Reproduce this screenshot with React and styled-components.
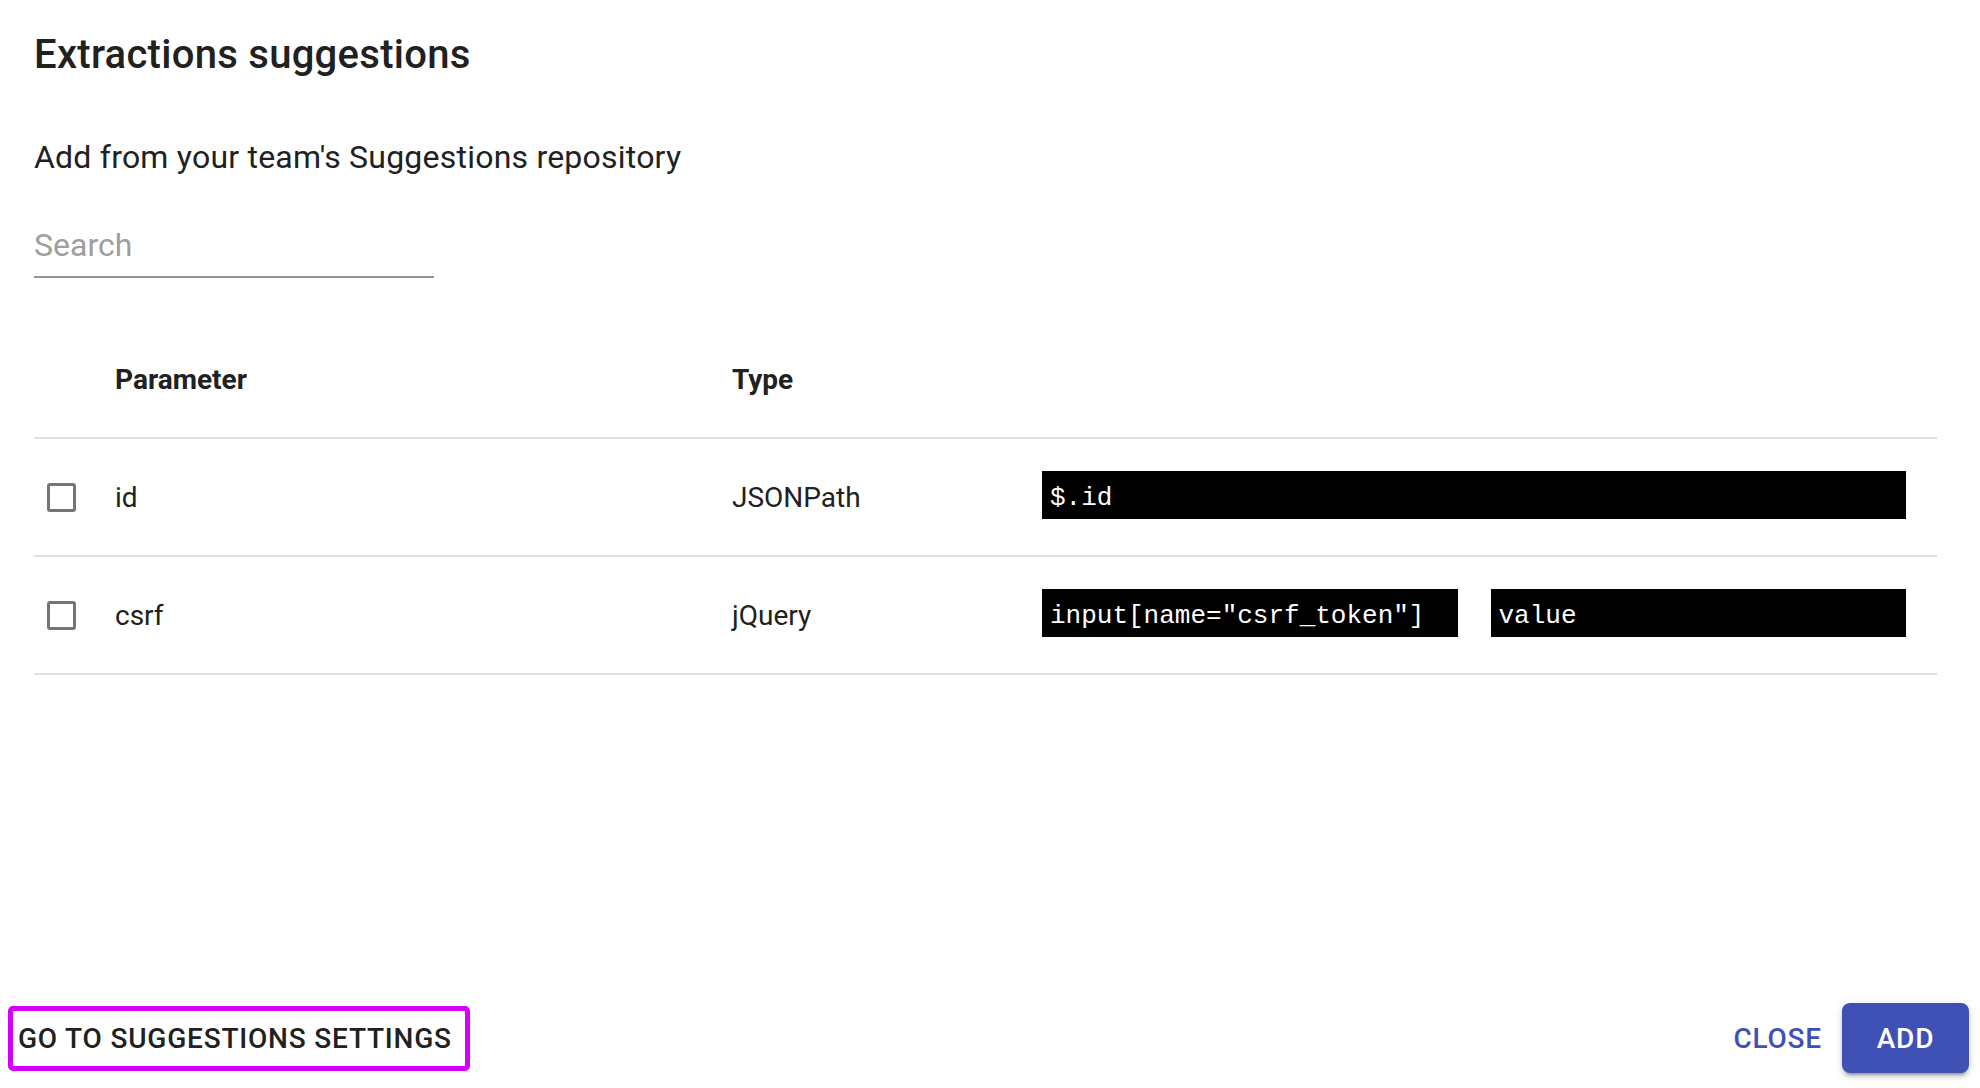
import React from 'react';
import styled, { createGlobalStyle } from 'styled-components';

const GlobalStyle = createGlobalStyle`
  html, body {
    margin: 0;
    padding: 0;
    background: #fff;
  }
  body {
    font-family: Roboto, "Noto Sans", "Liberation Sans", sans-serif;
    color: rgba(0, 0, 0, 0.87);
  }
  * {
    box-sizing: border-box;
  }
`;

const Page = styled.div`
  height: 100vh;
  display: flex;
  flex-direction: column;
`;

const Content = styled.div`
  padding: 31px 43px 0 34px;
  display: flex;
  flex-direction: column;
`;

const Title = styled.h2`
  margin: 0;
  font-size: 40px;
  line-height: 48px;
  font-weight: 500;
  letter-spacing: 0.28px;
  color: #212121;
`;

const Subtitle = styled.p`
  margin: 58px 0 0;
  font-size: 32px;
  line-height: 40px;
  letter-spacing: 0.22px;
  color: #212121;
`;

const SearchField = styled.div`
  margin-top: 48px;
  width: 400px;
  border-bottom: 2px solid #949494;
  padding-bottom: 11px;
`;

const SearchInput = styled.input`
  display: block;
  width: 100%;
  border: none;
  outline: none;
  padding: 0;
  font-family: inherit;
  font-size: 32px;
  line-height: 40px;
  height: 40px;
  color: #212121;
  background: transparent;

  &::placeholder {
    color: #9e9e9e;
    opacity: 1;
  }
`;

const Table = styled.div`
  margin-top: 42px;
  display: flex;
  flex-direction: column;
`;

const Row = styled.div`
  display: grid;
  grid-template-columns: 81px 617px 310px 1fr;
  align-items: center;
  height: ${props => (props.head ? '119px' : '118px')};
  padding-right: 31px;
  border-bottom: 2px solid #e0e0e0;
`;

const HeadCell = styled.div`
  font-size: 28px;
  font-weight: 700;
  line-height: 36px;
  color: #212121;
  padding-top: 2px;
`;

const Cell = styled.div`
  font-size: 28px;
  line-height: 36px;
  color: #212121;
  padding-top: 2px;
`;

const CheckCell = styled.div`
  padding-left: 13px;
  display: flex;
  align-items: center;
`;

const CheckBox = styled.span`
  display: block;
  width: 29px;
  height: 29px;
  border: 3px solid #757575;
  border-radius: 3px;
  background: #fff;
`;

const Values = styled.div`
  display: flex;
  gap: 33px;
  margin-bottom: 4px;
`;

const Code = styled.div`
  flex: 1;
  height: 48px;
  background: #000;
  color: #fff;
  font-family: "Liberation Mono", "DejaVu Sans Mono", monospace;
  font-size: 26px;
  line-height: 48px;
  padding: 3px 0 0 8px;
  white-space: pre;
  overflow: hidden;
`;

const Footer = styled.div`
  margin-top: auto;
  display: flex;
  align-items: center;
  padding: 0 11px 15px 8px;
`;

const SettingsButton = styled.button`
  height: 65px;
  padding: 0 13px 0 5px;
  border: 5px solid #d500f9;
  border-radius: 5px;
  background: #fff;
  font-family: inherit;
  font-size: 28px;
  font-weight: 500;
  letter-spacing: 0.8px;
  text-transform: uppercase;
  color: #212121;
  cursor: pointer;
`;

const Spacer = styled.div`
  flex: 1;
`;

const TextButton = styled.button`
  border: none;
  background: transparent;
  padding: 0;
  margin-right: 20px;
  font-family: inherit;
  font-size: 28px;
  font-weight: 500;
  letter-spacing: 0.8px;
  text-transform: uppercase;
  color: #3f51b5;
  cursor: pointer;
`;

const PrimaryButton = styled.button`
  width: 127px;
  height: 70px;
  border: none;
  border-radius: 8px;
  background: #3f51b5;
  color: #fff;
  font-family: inherit;
  font-size: 28px;
  font-weight: 500;
  letter-spacing: 0.8px;
  text-transform: uppercase;
  box-shadow: 0 6px 2px -4px rgba(0, 0, 0, 0.2), 0 4px 4px 0 rgba(0, 0, 0, 0.14),
    0 2px 10px 0 rgba(0, 0, 0, 0.12);
  cursor: pointer;
`;

const suggestions = [
  { id: 1, name: 'id', type: 'JSONPath', values: ['$.id'] },
  { id: 2, name: 'csrf', type: 'jQuery', values: ['input[name="csrf_token"]', 'value'] },
];

export default function App() {
  return (
    <>
      <GlobalStyle />
      <Page>
        <Content>
          <Title>Extractions suggestions</Title>
          <Subtitle>Add from your team's Suggestions repository</Subtitle>
          <SearchField>
            <SearchInput placeholder="Search" />
          </SearchField>

          <Table>
            <Row head>
              <div />
              <HeadCell>Parameter</HeadCell>
              <HeadCell>Type</HeadCell>
              <div />
            </Row>
            {suggestions.map(s => (
              <Row key={s.id}>
                <CheckCell>
                  <CheckBox />
                </CheckCell>
                <Cell>{s.name}</Cell>
                <Cell>{s.type}</Cell>
                <Values>
                  {s.values.map(v => (
                    <Code key={v}>{v}</Code>
                  ))}
                </Values>
              </Row>
            ))}
          </Table>
        </Content>

        <Footer>
          <SettingsButton>Go to suggestions settings</SettingsButton>
          <Spacer />
          <TextButton>Close</TextButton>
          <PrimaryButton>Add</PrimaryButton>
        </Footer>
      </Page>
    </>
  );
}
